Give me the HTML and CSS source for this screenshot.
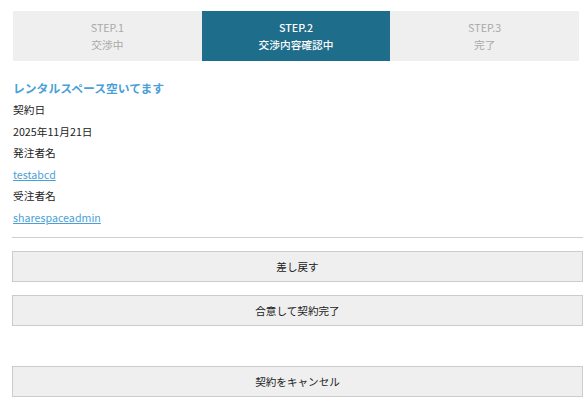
FILE: index.html
```html
<!DOCTYPE html>
<html lang="ja">
<head>
<meta charset="utf-8">
<link rel="stylesheet" href="styles.css">
</head>
<body>
<div class="page">
  <div class="steps">
    <div class="step"><span>STEP.1</span><span>交渉中</span></div>
    <div class="step active"><span>STEP.2</span><span>交渉内容確認中</span></div>
    <div class="step"><span>STEP.3</span><span>完了</span></div>
  </div>
  <div class="info">
    <h2 class="title">レンタルスペース空いてます</h2>
    <div class="line">契約日</div>
    <div class="line">2025年11月21日</div>
    <div class="line">発注者名</div>
    <div class="line"><a href="#" class="link">testabcd</a></div>
    <div class="line">受注者名</div>
    <div class="line"><a href="#" class="link">sharespaceadmin</a></div>
  </div>
  <hr class="divider">
  <div class="actions">
    <button class="btn">差し戻す</button>
    <button class="btn">合意して契約完了</button>
  </div>
  <div class="cancel">
    <button class="btn">契約をキャンセル</button>
  </div>
</div>
</body>
</html>
```

FILE: styles.css
```css
* { box-sizing: border-box; }
html, body { margin: 0; padding: 0; background: #fff; }
body {
  font-family: "Noto Sans CJK JP", "Noto Sans", sans-serif;
  font-size: 10.7px;
  color: #222;
}
.page {
  padding: 11px 4px 0 12px;
}
.steps {
  display: flex;
  width: 566px;
  margin-left: 1px;
  height: 50px;
  background: #efefef;
}
.step {
  flex: 1;
  display: flex;
  flex-direction: column;
  align-items: center;
  justify-content: center;
  color: #a9a9a9;
  font-size: 10.7px;
  line-height: 17px;
}
.step.active {
  background: #1e6d8a;
  color: #fff;
  font-weight: 500;
}
.info {
  padding-left: 1px;
  margin-top: 15px;
}
.title {
  margin: 0;
  font-size: 11.8px;
  font-weight: bold;
  color: #4a9fd8;
  line-height: 23px;
}
.line {
  line-height: 21.6px;
}
.link {
  color: #4a9fd8;
  text-decoration: underline;
}
.divider {
  border: 0;
  border-top: 1px solid #cfcfcf;
  margin: 8px 0 13px;
}
.actions {
  display: flex;
  flex-direction: column;
  gap: 13px;
}
.btn {
  display: block;
  width: 100%;
  height: 31px;
  background: #efefef;
  border: 1px solid #cccccc;
  font-family: "Noto Sans CJK JP", "Noto Sans", sans-serif;
  font-size: 10.6px;
  color: #222;
  padding: 0;
}
.cancel {
  margin-top: 40px;
}
```
